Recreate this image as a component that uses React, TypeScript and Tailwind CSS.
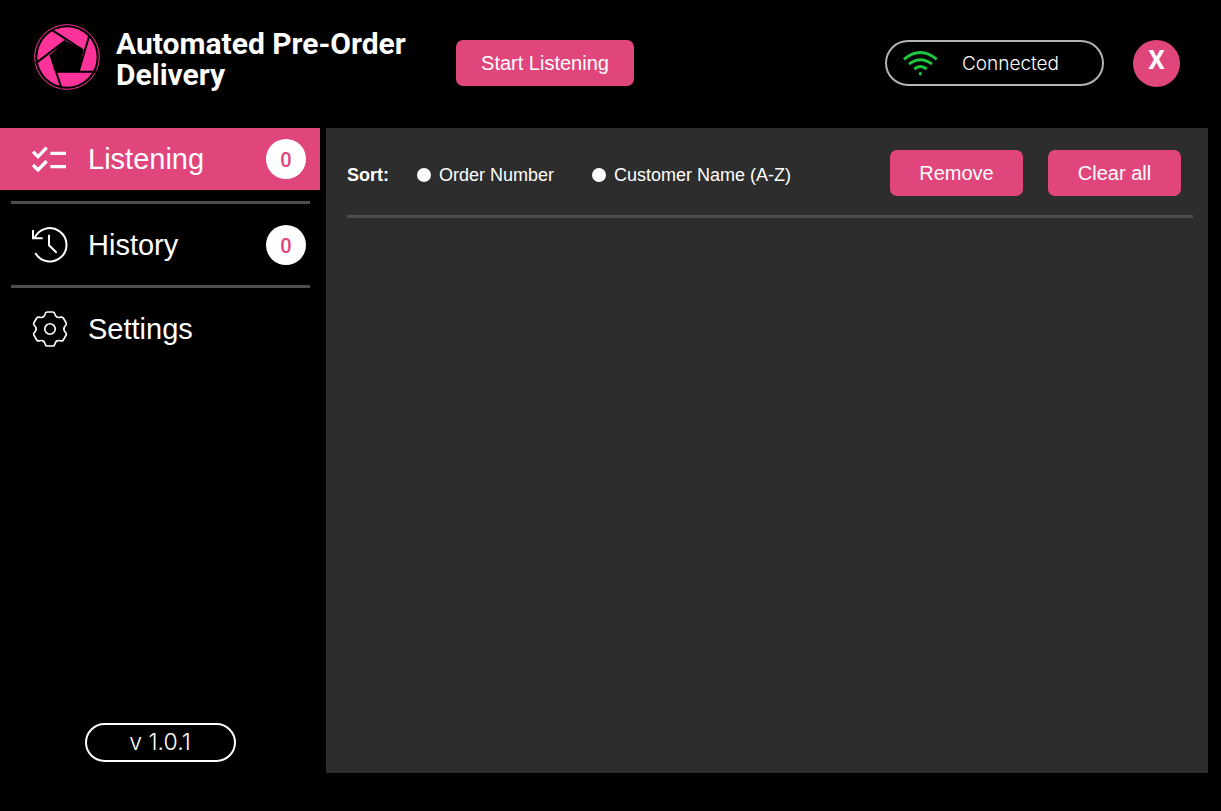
import { useState, type ReactNode } from "react";

function LogoIcon() {
  return (
    <svg viewBox="42 28 198 198" className="size-[66px] shrink-0" aria-hidden="true">
      <circle cx="141" cy="127" r="97" fill="none" stroke="#ff3399" strokeWidth="3" />
      <circle cx="141" cy="127" r="89" fill="#ff3399" />
      <path fill="#000" d="M136 78 190 107 176 170H110L91 120Z" />
      <path stroke="#000" strokeWidth="6" d="M94 45 190 107M208 62 176 171M232 171H110M125 222 91 120M47 146 136 78" />
    </svg>
  );
}

function ChecklistIcon() {
  return (
    <svg viewBox="96 78 105 78" className="h-[26px] w-[35px]" fill="none" stroke="#fff" aria-hidden="true">
      <path strokeWidth="10" d="M99 95 114 110 140 83M99 135 114 150 140 123" />
      <path strokeWidth="10" d="M151 100H198M151 140H198" />
    </svg>
  );
}

function HistoryIcon() {
  return (
    <svg viewBox="96 97 108 111" className="h-[37px] w-9" fill="none" stroke="#fff" strokeWidth="6" aria-hidden="true">
      <path d="M103 135A50 50 0 1 1 106 178" />
      <path d="M99 109V134H128M147 123V155L170 177" />
    </svg>
  );
}

function GearIcon() {
  const tooth = "M-21-37C-18-38-17-40-16-43L-14-48Q-13-52-8-52H8Q13-52 14-48L16-43C17-40 18-38 21-37";
  return (
    <svg viewBox="-55 -55 110 110" className="size-9" fill="none" stroke="#fff" strokeWidth="5" strokeLinecap="round" aria-hidden="true">
      {[0, 60, 120, 180, 240, 300].map((angle) => (
        <path key={angle} d={tooth} transform={`rotate(${angle})`} />
      ))}
      <circle r="16" />
    </svg>
  );
}

function WifiIcon() {
  return (
    <svg viewBox="99 75 105 78" className="h-[26px] w-[35px]" fill="none" stroke="#1dc840" strokeWidth="9" aria-hidden="true">
      <path d="M102 103Q151 62 200 103M117 117Q151 91 186 117M133 132Q151 117 170 132" />
      <circle cx="151" cy="146" r="5" fill="#1dc840" stroke="none" />
    </svg>
  );
}

function PinkButton({ children, width }: { children: ReactNode; width: string }) {
  return (
    <button
      type="button"
      className={`h-[46px] rounded-[7px] bg-[#e0457b] pb-px text-xl text-white ${width}`}
    >
      {children}
    </button>
  );
}

type NavItemProps = {
  icon: ReactNode;
  label: string;
  count?: number;
  size: string;
};

function NavItem({ icon, label, count, size }: NavItemProps) {
  return (
    <button type="button" className={`flex w-full items-center pr-3.5 pl-8 text-left text-white ${size}`}>
      <span className="flex w-14 items-center">{icon}</span>
      <span className="flex-1 text-[29px] leading-9">{label}</span>
      {count !== undefined && (
        <span className="flex size-10 items-center justify-center rounded-full bg-white pt-0.5 font-['Roboto',sans-serif] text-xl font-medium text-[#e0457b]">
          {count}
        </span>
      )}
    </button>
  );
}

const sortOptions = ["Order Number", "Customer Name (A-Z)"];

export default function App() {
  const [sort, setSort] = useState("");

  return (
    <div className="flex min-h-screen flex-col bg-black font-['Liberation_Sans',Arial,sans-serif] text-white">
      <header className="flex h-32 items-start pr-[41px] pl-[34px]">
        <div className="flex w-[422px] items-start gap-4 pt-6">
          <LogoIcon />
          <h1 className="w-[310px] pt-1 font-['Roboto',sans-serif] text-[30px] leading-[31px] font-bold">
            Automated Pre-Order Delivery
          </h1>
        </div>
        <div className="flex flex-1 items-start justify-between pt-10">
          <PinkButton width="w-[178px]">Start Listening</PinkButton>
          <div className="flex items-start gap-[29px]">
            <div className="flex h-[46px] w-[219px] items-center gap-6 rounded-full border-2 border-[#b3b3b3] px-4 font-['Inter',sans-serif] text-[19px] font-light">
              <WifiIcon />
              <span className="pt-0.5">Connected</span>
            </div>
            <button
              type="button"
              aria-label="Close"
              className="size-[47px] rounded-full bg-[#e0457b] pb-1.5 font-['Roboto',sans-serif] text-[26px] font-bold text-white"
            >
              X
            </button>
          </div>
        </div>
      </header>

      <div className="flex flex-1 gap-1.5 pr-[13px]">
        <aside className="flex w-80 shrink-0 flex-col pb-[49px]">
          <nav>
            <NavItem icon={<ChecklistIcon />} label="Listening" count={0} size="h-[62px] bg-[#e0457b]" />
            <hr className="mt-[11px] mr-2.5 ml-[11px] border-t-3 border-[#4d4d4d]" />
            <NavItem icon={<HistoryIcon />} label="History" count={0} size="h-[81px]" />
            <hr className="mr-2.5 ml-[11px] border-t-3 border-[#4d4d4d]" />
            <NavItem icon={<GearIcon />} label="Settings" size="h-[81px]" />
          </nav>
          <div className="mt-auto flex h-[39px] w-[151px] items-center justify-center self-center rounded-full border-2 border-white font-['Inter',sans-serif] text-[23px] font-light">
            v 1.0.1
          </div>
        </aside>

        <main className="mb-[38px] flex-1 bg-[#2d2d2d] pt-[22px] pr-[15px] pl-[21px]">
          <div className="flex items-center justify-between pr-3">
            <fieldset className="flex items-center pt-[3px] text-lg">
              <legend className="float-left w-[70px] font-bold">Sort:</legend>
              <div className="flex items-center gap-[38px]">
                {sortOptions.map((option) => (
                  <label key={option} className="flex items-center gap-2">
                    <input
                      type="radio"
                      name="sort"
                      value={option}
                      checked={sort === option}
                      onChange={() => setSort(option)}
                      className="size-3.5 appearance-none rounded-full bg-white checked:border-4 checked:border-[#e0457b]"
                    />
                    {option}
                  </label>
                ))}
              </div>
            </fieldset>
            <div className="flex gap-[25px]">
              <PinkButton width="w-[133px]">Remove</PinkButton>
              <PinkButton width="w-[133px]">Clear all</PinkButton>
            </div>
          </div>
          <hr className="mt-[19px] border-t-3 border-[#4d4d4d]" />
        </main>
      </div>
    </div>
  );
}
